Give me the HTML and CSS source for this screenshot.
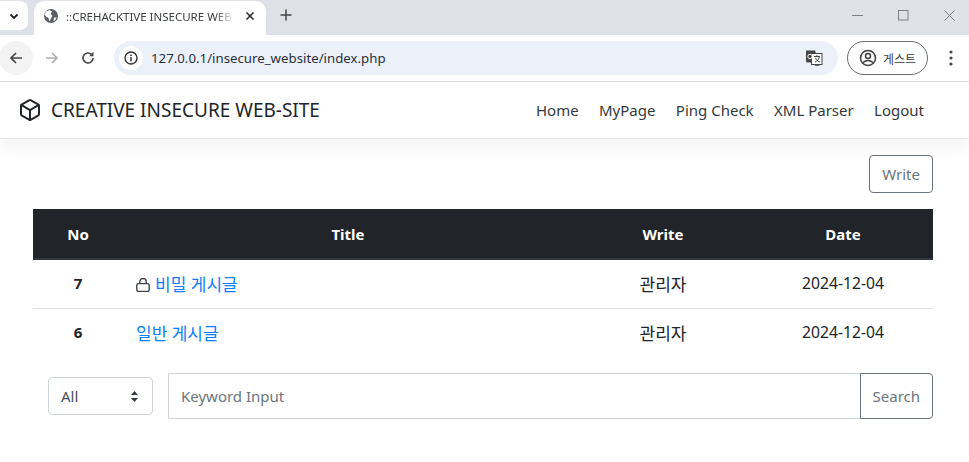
FILE: index.html
```html
<!DOCTYPE html>
<html lang="ko">
<head>
<meta charset="utf-8">
<title>::CREHACKTIVE INSECURE WEB-SITE::</title>
<link rel="stylesheet" href="styles.css">
</head>
<body>
<div class="chrome">
  <div class="tabstrip">
    <div class="tab-search"><svg width="12" height="12" viewBox="0 0 12 12"><path d="M2.5 4.500 6 8l3.500-3.500" fill="none" stroke="#1f1f1f" stroke-width="1.800"/></svg></div>
    <div class="tab">
      <svg class="globe" width="16" height="16" viewBox="0 0 16 16"><circle cx="8" cy="8" r="7" fill="#5b5e63"/><path d="M3 3.500 6.500 2 9 3.500 7.500 6 9.500 7.500 8 10.500 6.500 13.500 5.500 10 3 8.500 1.500 6.500ZM11 9.500h2.500l-1.500 3-1.500.500Z" fill="#fff"/></svg>
      <span class="tab-title">::CREHACKTIVE INSECURE WEB</span>
      <svg class="tab-close" width="10" height="10" viewBox="0 0 10 10"><path d="M1.500 1.500l7 7m0-7-7 7" stroke="#2b2b2b" stroke-width="1.600"/></svg>
    </div>
    <svg class="new-tab" width="12" height="12" viewBox="0 0 12 12"><path d="M6 .5v11M.5 6h11" stroke="#444" stroke-width="1.500"/></svg>
    <div class="win-controls">
      <svg width="11" height="11" viewBox="0 0 11 11"><path d="M0 5.500h11" stroke="#7d8187"/></svg>
      <svg width="11" height="11" viewBox="0 0 11 11"><rect x=".5" y=".5" width="9.500" height="9.500" fill="none" stroke="#7d8187"/></svg>
      <svg width="11" height="11" viewBox="0 0 11 11"><path d="M.5.500l10 10m0-10-10 10" stroke="#7d8187"/></svg>
    </div>
  </div>
  <div class="toolbar">
    <div class="tool-btn back"><svg width="16" height="16" viewBox="0 0 16 16"><path d="M14 8H3M8 3 3 8l5 5" fill="none" stroke="#474747" stroke-width="1.700"/></svg></div>
    <div class="tool-btn"><svg width="16" height="16" viewBox="0 0 16 16"><path d="M2 8h11M8 3l5 5-5 5" fill="none" stroke="#adaeb0" stroke-width="1.700"/></svg></div>
    <div class="tool-btn"><svg width="16" height="16" viewBox="0 0 16 16"><path d="M13 8a5 5 0 1 1-1.500-3.600" fill="none" stroke="#474747" stroke-width="1.600"/><path d="M13.500 1.800v4.400H9.100Z" fill="#474747"/></svg></div>
    <div class="omnibox">
      <div class="site-info"><svg width="16" height="16" viewBox="0 0 16 16"><circle cx="8" cy="8" r="6" fill="none" stroke="#333" stroke-width="1.400"/><path d="M8 7v4.200M8 4.600v1.400" stroke="#333" stroke-width="1.500"/></svg></div>
      <span class="url">127.0.0.1/insecure_website/index.php</span>
      <svg class="translate" width="18" height="18" viewBox="0 0 18 18"><path d="M1 1.500h9l1 3H7v9H2.500A1.500 1.500 0 0 1 1 12Z" fill="#474747"/><rect x="6.500" y="4.500" width="10.500" height="11" fill="#fff" stroke="#474747"/><path d="M10 16.800h4.500v-1.500H10Z" fill="#474747"/><circle cx="5" cy="7.500" r="2.200" fill="none" stroke="#fff"/><path d="M9 7.500h6M12 6v1.500M10 13c2.500-1 4-3 4.500-5.500M10.500 9c.7 2 2.300 3.500 4.500 4" fill="none" stroke="#474747"/></svg>
    </div>
    <div class="profile">
      <svg width="18" height="18" viewBox="0 0 18 18"><circle cx="9" cy="9" r="7.500" fill="none" stroke="#3c3c3c" stroke-width="1.500"/><circle cx="9" cy="7" r="2.500" fill="none" stroke="#3c3c3c" stroke-width="1.500"/><path d="M4 13.500c3-2.500 7-2.500 10 0" fill="none" stroke="#3c3c3c" stroke-width="1.500"/></svg>
      <span class="profile-name">게스트</span>
    </div>
    <svg class="menu-dots" width="4" height="16" viewBox="0 0 4 16"><circle cx="2" cy="2" r="1.600" fill="#474747"/><circle cx="2" cy="8" r="1.600" fill="#474747"/><circle cx="2" cy="14" r="1.600" fill="#474747"/></svg>
  </div>
</div>

<nav class="navbar">
  <a class="brand" href="#">
    <svg width="24" height="24" viewBox="0 0 24 24" fill="none" stroke="#212529" stroke-width="2" stroke-linecap="round" stroke-linejoin="round"><path d="M21 16V8a2 2 0 0 0-1-1.730l-7-4a2 2 0 0 0-2 0l-7 4A2 2 0 0 0 3 8v8a2 2 0 0 0 1 1.730l7 4a2 2 0 0 0 2 0l7-4A2 2 0 0 0 21 16z"/><path d="M3.270 6.960 12 12.010l8.730-5.050M12 22.080V12"/></svg>
    <span>CREATIVE INSECURE WEB-SITE</span>
  </a>
  <div class="nav-links">
    <a href="#">Home</a><a href="#">MyPage</a><a href="#">Ping Check</a><a href="#">XML Parser</a><a href="#">Logout</a>
  </div>
</nav>

<main class="content">
  <div class="write-row"><a class="btn" href="#">Write</a></div>
  <table class="board">
    <thead>
      <tr><th class="c-no">No</th><th class="c-title">Title</th><th class="c-write">Write</th><th class="c-date">Date</th></tr>
    </thead>
    <tbody>
      <tr>
        <th>7</th>
        <td><svg class="lock" width="14" height="14" viewBox="0 0 14 14" fill="none" stroke="#3f454b" stroke-width="1.400"><rect x=".8" y="5.600" width="12.400" height="7.800" rx="1.600"/><path d="M3.800 5.600V3.500a3.200 2.900 0 0 1 6.400 0v2.100"/></svg> <a class="ko" href="#">비밀 게시글</a></td>
        <td class="center ko">관리자</td>
        <td class="center">2024-12-04</td>
      </tr>
      <tr>
        <th>6</th>
        <td><a class="ko" href="#">일반 게시글</a></td>
        <td class="center ko">관리자</td>
        <td class="center">2024-12-04</td>
      </tr>
    </tbody>
  </table>
  <form class="search">
    <div class="select">All<svg width="9" height="13" viewBox="0 0 9 13"><path d="M4.500 1 8 5H1ZM4.500 12 1 8h7Z" fill="#343a40"/></svg></div>
    <div class="input-group">
      <div class="input">Keyword Input</div>
      <a class="btn btn-search" href="#">Search</a>
    </div>
  </form>
</main>
</body>
</html>
```
FILE: styles.css
```css
* { box-sizing: border-box; }
html, body { margin: 0; padding: 0; height: 100%; overflow: hidden; }
body {
  background: #fff;
  color: #212529;
  font-family: "Noto Sans", "Noto Sans CJK KR", sans-serif;
  font-size: 16px;
}
a { text-decoration: none; color: inherit; }

.chrome { height: 82px; border-bottom: 1px solid #e2e3e5; }
.tabstrip {
  height: 35px;
  background: #dee1e7;
  display: flex;
  align-items: flex-start;
}
.tab-search {
  width: 28px; height: 29px;
  margin: 1px 6px 0 0;
  background: #fff;
  border-radius: 0 8px 8px 0;
  display: flex; align-items: center; justify-content: center;
}
.tab {
  width: 232px; height: 34px;
  margin-top: 1px;
  background: #fff;
  border-radius: 10px 10px 0 0;
  display: flex; align-items: center;
  padding: 0 11px 4px 9px;
}
.globe { flex: none; }
.tab-title {
  flex: 1;
  margin-left: 7px;
  font: 11.500px "Noto Sans", sans-serif;
  color: #3c4043;
  white-space: nowrap;
  -webkit-mask-image: linear-gradient(to right, #000 88%, transparent);
  mask-image: linear-gradient(to right, #000 88%, transparent);
}
.tab-close { flex: none; margin-left: 10px; }
.new-tab { margin: 9px 0 0 14px; }
.win-controls {
  margin-left: auto;
  display: flex;
  gap: 35px;
  padding: 10px 14px 0 0;
}

.toolbar {
  height: 46px;
  display: flex;
  align-items: center;
  background: #fff;
}
.tool-btn {
  width: 34px; height: 34px;
  margin-left: 2px;
  flex: none;
  border-radius: 50%;
  display: flex; align-items: center; justify-content: center;
}
.tool-btn.back { margin-left: -1px; background: #f3f3f4; }
.omnibox {
  width: 724px; height: 34px;
  margin-left: 9px;
  background: #ebf0f9;
  border-radius: 17px;
  display: flex; align-items: center;
  padding: 0 15px 0 5px;
  flex: none;
}
.site-info {
  width: 24px; height: 24px;
  background: #fff;
  border-radius: 50%;
  display: flex; align-items: center; justify-content: center;
}
.url {
  flex: 1;
  margin-left: 8px;
  font: 13.250px "Noto Sans", sans-serif;
  color: #2a3140;
}
.translate { flex: none; }
.profile {
  width: 81px; height: 34px;
  margin-left: 9px;
  border: 1px solid #6b6e72;
  border-radius: 17px;
  display: flex; align-items: center;
  padding-left: 11px;
  flex: none;
}
.profile-name {
  margin-left: 6px;
  font: 12px "Noto Sans CJK KR", sans-serif;
  color: #3c3c3c;
}
.menu-dots { margin-left: 21px; flex: none; }

.navbar {
  height: 57px;
  padding: 0 45px 0 18px;
  display: flex;
  align-items: center;
  justify-content: space-between;
  border-bottom: 1px solid #e3e4e6;
  box-shadow: 0 8px 16px rgba(0,0,0,.05);
}
.brand {
  display: flex; align-items: center; gap: 9px;
  font-size: 19px;
  color: #212529;
}
.nav-links { display: flex; gap: 20.400px; font-size: 15px; color: #343a40; }

.content { padding: 16px 36px 0 33px; }
.write-row { display: flex; justify-content: flex-end; }
.btn {
  display: block;
  color: #6c757d;
  border: 1px solid #6c757d;
  border-radius: 4px;
  font-size: 15px;
  line-height: 36px;
  padding: 0 12px;
}
.board {
  width: 900px;
  margin-top: 16px;
  border-collapse: collapse;
  table-layout: fixed;
  font-size: 15.700px;
}
.board thead th {
  background: #212529;
  color: #fff;
  height: 50px;
  font-weight: 700;
  border-bottom: 2px solid #32383e;
  text-align: center;
  font-size: 15px;
}
.c-no { width: 90px; }
.c-write { width: 180px; }
.c-date { width: 180px; }
.board tbody th, .board tbody td {
  height: 49px;
  border-bottom: 1px solid #dee2e6;
  vertical-align: middle;
  padding: 0 13px 1px;
}
.board tbody th { text-align: center; color: #212529; font-weight: 700; font-size: 15px; }
.board tbody tr:last-child th, .board tbody tr:last-child td { border-bottom: 0; }
.board td a { color: #0d7efd; }
.center { text-align: center; color: #212529; }
.ko { font-size: 17px; }
.lock { vertical-align: -1px; margin-right: 1px; }

.search {
  display: flex;
  align-items: center;
  gap: 15px;
  margin-top: 16px;
  padding-left: 15px;
}
.select {
  width: 105px; height: 38px;
  border: 1px solid #ced4da;
  border-radius: 4px;
  color: #495057;
  padding: 0 13px 0 12px;
  font-size: 15px;
  display: flex; align-items: center; justify-content: space-between;
}
.input-group { flex: 1; display: flex; height: 46px; }
.input {
  flex: 1;
  border: 1px solid #ced4da;
  border-right: 0;
  color: #6c757d;
  font-size: 15px;
  padding: 0 12px;
  display: flex; align-items: center;
}
.btn-search {
  border-radius: 0 4px 4px 0;
  line-height: 44px;
}
```
